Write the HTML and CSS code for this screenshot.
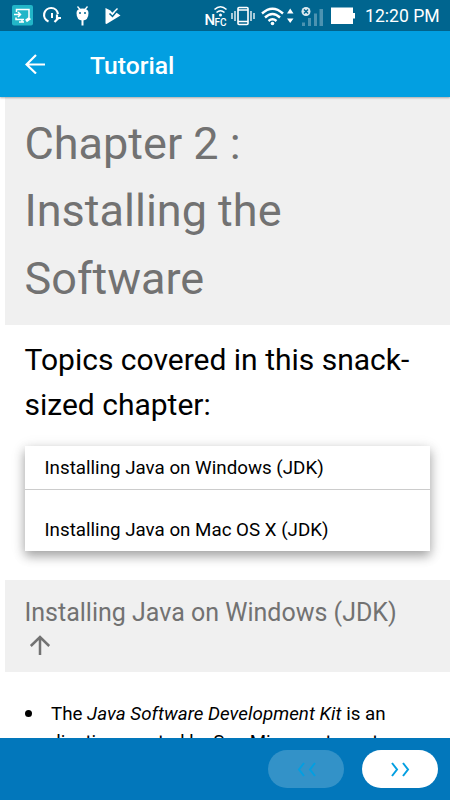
FILE: index.html
```html
<!DOCTYPE html>
<html lang="en">
<head>
    <meta charset="UTF-8">
    <meta name="viewport" content="width=device-width, initial-scale=1.0">
    <title>Tutorial</title>
    <link rel="stylesheet" href="styles.css">
</head>
<body>
    <div class="status-bar">
        <svg class="status-icons" width="130" height="31" viewBox="0 0 130 31">
            <rect x="12" y="5" width="21" height="20.500" rx="2" fill="#22b6c8"/>
            <g fill="none" stroke="#fff" stroke-width="1.500">
                <path d="M16.500 12V9.500h12.500v8M16 17.500v2h8M22 20v2M19 22h5"/>
                <path d="M14 14.500h6M18 12l2.500 2.500L18 17"/>
                <path d="M26 21l4-3" stroke-width="3"/>
            </g>
            <g fill="none" stroke="#fff" stroke-width="2.2">
                <path d="M48.500 21.500A7 7 0 1 1 58 14"/>
                <path d="M52 13v5" stroke-width="2"/>
                <path d="M54.500 22l4-4M57 14.500v3.500h4" stroke-width="2.200"/>
            </g>
            <path d="M77.500 6.500l2.500 3M87.500 6.500l-2.500 3" stroke="#fff" stroke-width="1.300"/>
            <path d="M76.500 13q0-4.500 6-4.500t6 4.500q0 7.500-6 7.500t-6-7.500z" fill="#fff"/>
            <path d="M82.500 20v5.500" stroke="#fff" stroke-width="2"/>
            <circle cx="80" cy="13" r="1" fill="#00658f"/>
            <circle cx="85" cy="13" r="1" fill="#00658f"/>
            <path d="M105.500 8l5 2.500 2 2.500 3-1 5 3.500-14 8.500-1-.500z" fill="#fff"/>
            <path d="M109.500 13.500l3 3 5.500-6.500" fill="none" stroke="#00658f" stroke-width="1.500"/>
            <path d="M112.500 13.500l5-5" fill="none" stroke="#fff" stroke-width="1.500"/>
        </svg>
        <svg class="status-icons" width="160" height="31" viewBox="200 0 160 31">
            <text class="nfc-n" x="204.500" y="24.500">N</text>
            <text class="nfc-fc" x="214.500" y="25.500">FC</text>
            <g fill="none" stroke="#fff" stroke-width="1.6">
                <path d="M214.500 9.500q6-5.500 12 0M216.500 12.500q4-3.500 8 0"/>
                <rect x="238" y="7.500" width="10" height="17" rx="1"/>
                <path d="M238 10h10M238 21.500h10" stroke-width="1.300"/>
                <path d="M235 11v10M232 13v6M251 11v10M254 13v6" stroke-width="1.300"/>
            </g>
            <circle cx="220.500" cy="15" r="1.500" fill="#fff"/>
            <g fill="none" stroke="#fff" stroke-width="2.4">
                <path d="M262 13.500q10.500-9.500 21 0M265 17.500q7.500-7 15 0M268.500 21q4-3.500 8 0"/>
            </g>
            <circle cx="272.500" cy="23.500" r="1.800" fill="#fff"/>
            <path d="M287 13.500l3.200-5 3.300 5zM287 18.500h6.500l-3.300 4.500z" fill="#fff"/>
            <path d="M302 22.500h3V26h-3zM308 18h3v8h-3zM314 13.500h3V26h-3zM319.500 9h3.500v17h-3.500z" fill="#4c93b1"/>
            <circle cx="306" cy="11.500" r="4.500" fill="#dce9ef"/>
            <path d="M304 9.500l4 4M308 9.500l-4 4" stroke="#00658f" stroke-width="1.500"/>
            <path d="M331 7.500h22v5.500h2v5.500h-2v5.500h-22z" fill="#fff"/>
        </svg>
        <span class="clock">12:20 PM</span>
    </div>

    <header class="app-bar">
        <svg width="20" height="20" viewBox="0 0 20 20" fill="none" stroke="#fff" stroke-width="2.200">
            <path d="M20 10.500H2M11 1L1.500 10.500l9.500 9"/>
        </svg>
        <span class="app-title">Tutorial</span>
    </header>

    <main class="content">
        <h1>Chapter 2 : Installing the Software</h1>
        <h2>Topics covered in this snack-sized chapter:</h2>
        <ul class="topics">
            <li>Installing Java on Windows (JDK)</li>
            <li>Installing Java on Mac OS X (JDK)</li>
        </ul>
        <h3>
            Installing Java on Windows (JDK)
            <svg width="30" height="21" viewBox="0 0 30 21" fill="none" stroke="#727272" stroke-width="2.500">
                <path d="M15 20V2M5.800 11L15 2l9.200 9"/>
            </svg>
        </h3>
        <ul class="notes">
            <li>The <i>Java Software Development Kit</i> is an<br>application created by Sun Microsystems to</li>
        </ul>
    </main>

    <footer class="nav-bar">
        <button class="nav-button" disabled>
            <svg width="19" height="15" viewBox="0 0 19 15"><path d="M7 1L2 7.500 7 14M18 1l-5 6.500 5 6.500"/></svg>
        </button>
        <button class="nav-button">
            <svg width="19" height="15" viewBox="0 0 19 15"><path d="M1 1l5 6.500L1 14M12 1l5 6.500-5 6.500"/></svg>
        </button>
    </footer>
</body>
</html>
```

FILE: styles.css
```css
body {
    font-family: Roboto, sans-serif;
    margin: 0;
    height: 800px;
    display: flex;
    flex-direction: column;
    overflow: hidden;
    background-color: #fff;
    color: #000;
}
.status-bar {
    flex: none;
    height: 31px;
    display: flex;
    background-color: #00658f;
    color: #fff;
}
.status-icons {
    flex: none;
}
.status-icons + .status-icons {
    margin-left: 70px;
}
.nfc-n {
    font-size: 15px;
    font-weight: 500;
    fill: #fff;
}
.nfc-fc {
    font-size: 10px;
    font-weight: 500;
    fill: #fff;
}
.clock {
    margin-left: 5px;
    font-size: 17.6px;
    line-height: 33px;
    white-space: nowrap;
}
.app-bar {
    flex: none;
    height: 66px;
    display: flex;
    align-items: center;
    gap: 45px;
    padding-left: 25px;
    box-sizing: border-box;
    background-color: #029fe1;
    color: #fff;
    box-shadow: 0 1px 2px rgba(0,0,0,0.3);
    z-index: 1;
}
.app-title {
    padding-top: 4px;
    font-size: 24.7px;
    font-weight: 500;
    line-height: 30px;
}
.content {
    flex: 1;
    min-height: 0;
    overflow: hidden;
    padding-left: 5px;
}
h1, h2, h3 {
    margin: 0;
    font-weight: normal;
}
h1 {
    padding: 12.6px 100px 12.9px 19.5px;
    background-color: #f0f0f0;
    color: #727272;
    font-size: 45px;
    line-height: 67.5px;
}
h2 {
    padding: 12px 20px 0 19.5px;
    font-size: 30px;
    line-height: 45px;
}
.topics {
    list-style: none;
    margin: 19px 20px 0;
    padding: 0;
    background-color: #fff;
    box-shadow: 0 5px 10px rgba(0,0,0,0.3), 0 3px 15px rgba(0,0,0,0.12);
    font-size: 18.75px;
    line-height: 28px;
}
.topics li {
    padding: 8px 20px 7px 19.5px;
}
.topics li + li {
    padding-top: 26px;
    border-top: 1px solid #ccc;
}
h3 {
    margin-top: 29px;
    padding: 14px 20px 15.5px 19.5px;
    background-color: #f0f0f0;
    color: #727272;
    font-size: 25px;
    line-height: 37.5px;
}
h3 svg {
    display: block;
    margin-top: 4px;
}
.notes {
    list-style: none;
    margin: 28px 0 0;
    padding-left: 20px;
    font-size: 18.75px;
    line-height: 28px;
}
.notes li::before {
    content: "";
    display: inline-block;
    width: 7px;
    height: 7px;
    margin-right: 19px;
    border-radius: 50%;
    background-color: #000;
    vertical-align: 3px;
}
.notes i {
    letter-spacing: 0.05px;
}
.nav-bar {
    flex: none;
    height: 62px;
    display: flex;
    align-items: center;
    justify-content: flex-end;
    gap: 18px;
    padding-right: 12px;
    background-color: #0277bb;
}
.nav-button {
    width: 76px;
    height: 38px;
    padding: 0;
    border: none;
    border-radius: 19px;
    background-color: #fff;
    display: flex;
    align-items: center;
    justify-content: center;
}
.nav-button:disabled {
    background-color: #3392c8;
}
.nav-button path {
    fill: none;
    stroke: #039fe1;
    stroke-width: 2;
}
```
